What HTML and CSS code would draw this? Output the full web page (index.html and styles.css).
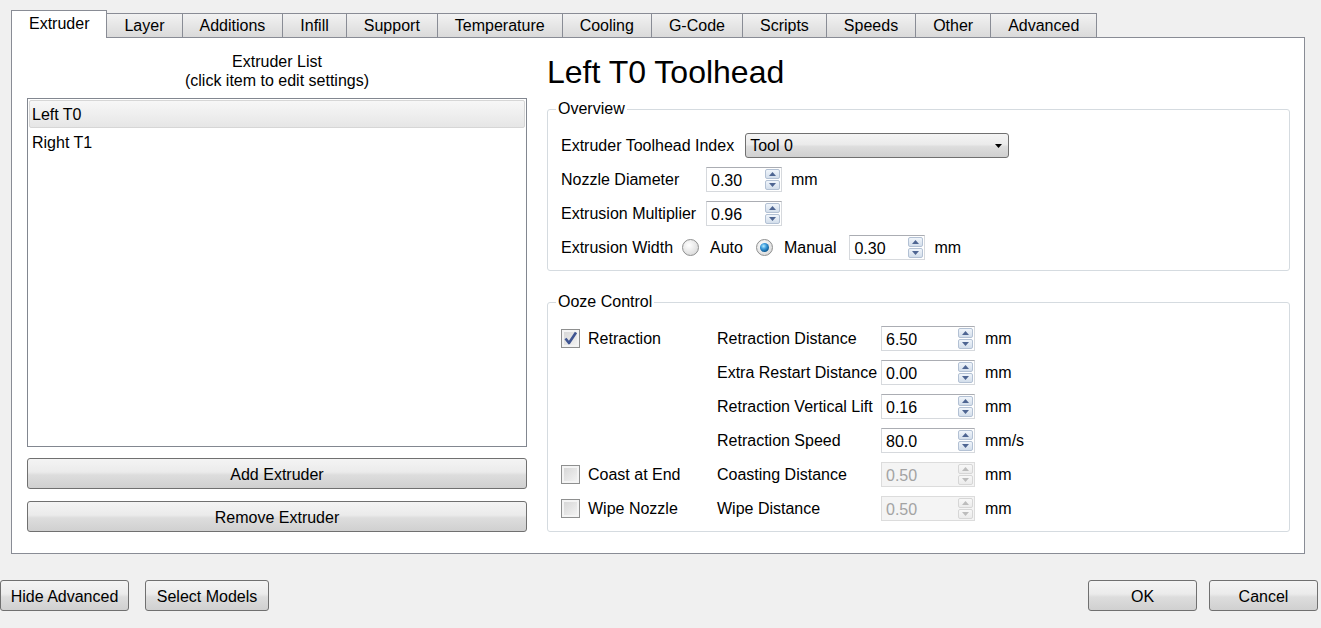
FILE: index.html
```html
<!DOCTYPE html>
<html lang="en">
<head>
<meta charset="utf-8">
<title>Extruder Settings</title>
<link rel="stylesheet" href="styles.css">
</head>
<body>
<div class="dialog">
  <div class="tabs">
    <div class="tab active">Extruder</div>
    <div class="tab">Layer</div>
    <div class="tab">Additions</div>
    <div class="tab">Infill</div>
    <div class="tab">Support</div>
    <div class="tab">Temperature</div>
    <div class="tab">Cooling</div>
    <div class="tab">G-Code</div>
    <div class="tab">Scripts</div>
    <div class="tab">Speeds</div>
    <div class="tab">Other</div>
    <div class="tab">Advanced</div>
  </div>
  <div class="pane">
    <div class="left">
      <div class="caption">Extruder List<br>(click item to edit settings)</div>
      <div class="listbox">
        <div class="item selected">Left T0</div>
        <div class="item">Right T1</div>
      </div>
      <button class="btn wide add">Add Extruder</button>
      <button class="btn wide remove">Remove Extruder</button>
    </div>
    <div class="right">
      <h1 class="title">Left T0 Toolhead</h1>
      <fieldset class="group">
        <legend>Overview</legend>
        <div class="group-body">
          <div class="row">
            <span>Extruder Toolhead Index</span>
            <div class="combo"><span>Tool 0</span><svg class="combo-arrow" width="7" height="4" viewBox="0 0 7 4"><polygon points="0,0 7,0 3.5,4" fill="#000"/></svg></div>
          </div>
          <div class="row">
            <span class="lbl-fixed">Nozzle Diameter</span>
            <div class="spin"><span class="val">0.30</span><span class="arrows"><span class="arr"><svg width="7" height="4" viewBox="0 0 7 4"><polygon points="0,4 3.5,0 7,4"/></svg></span><span class="arr"><svg width="7" height="4" viewBox="0 0 7 4"><polygon points="0,0 7,0 3.5,4"/></svg></span></span></div>
            <span>mm</span>
          </div>
          <div class="row">
            <span class="lbl-fixed">Extrusion Multiplier</span>
            <div class="spin"><span class="val">0.96</span><span class="arrows"><span class="arr"><svg width="7" height="4" viewBox="0 0 7 4"><polygon points="0,4 3.5,0 7,4"/></svg></span><span class="arr"><svg width="7" height="4" viewBox="0 0 7 4"><polygon points="0,0 7,0 3.5,4"/></svg></span></span></div>
          </div>
          <div class="row">
            <span>Extrusion Width</span>
            <label class="radio-opt"><span class="radio"></span><span>Auto</span></label>
            <label class="radio-opt"><span class="radio on"></span><span>Manual</span></label>
            <div class="spin"><span class="val">0.30</span><span class="arrows"><span class="arr"><svg width="7" height="4" viewBox="0 0 7 4"><polygon points="0,4 3.5,0 7,4"/></svg></span><span class="arr"><svg width="7" height="4" viewBox="0 0 7 4"><polygon points="0,0 7,0 3.5,4"/></svg></span></span></div>
            <span>mm</span>
          </div>
        </div>
      </fieldset>

      <fieldset class="group ooze">
        <legend>Ooze Control</legend>
        <div class="group-body ooze-grid">
          <label class="chk-opt"><span class="check"><svg width="17" height="17" viewBox="0 0 17 17"><path d="M3.5 8.5 L7 13 L14 2.5" fill="none" stroke="#3f5592" stroke-width="2.6" stroke-linejoin="round"/></svg></span><span>Retraction</span></label>
          <span>Retraction Distance</span>
          <div class="spin wide-spin"><span class="val">6.50</span><span class="arrows"><span class="arr"><svg width="7" height="4" viewBox="0 0 7 4"><polygon points="0,4 3.5,0 7,4"/></svg></span><span class="arr"><svg width="7" height="4" viewBox="0 0 7 4"><polygon points="0,0 7,0 3.5,4"/></svg></span></span></div>
          <span class="unit">mm</span>

          <span></span>
          <span>Extra Restart Distance</span>
          <div class="spin wide-spin"><span class="val">0.00</span><span class="arrows"><span class="arr"><svg width="7" height="4" viewBox="0 0 7 4"><polygon points="0,4 3.5,0 7,4"/></svg></span><span class="arr"><svg width="7" height="4" viewBox="0 0 7 4"><polygon points="0,0 7,0 3.5,4"/></svg></span></span></div>
          <span class="unit">mm</span>

          <span></span>
          <span>Retraction Vertical Lift</span>
          <div class="spin wide-spin"><span class="val">0.16</span><span class="arrows"><span class="arr"><svg width="7" height="4" viewBox="0 0 7 4"><polygon points="0,4 3.5,0 7,4"/></svg></span><span class="arr"><svg width="7" height="4" viewBox="0 0 7 4"><polygon points="0,0 7,0 3.5,4"/></svg></span></span></div>
          <span class="unit">mm</span>

          <span></span>
          <span>Retraction Speed</span>
          <div class="spin wide-spin"><span class="val">80.0</span><span class="arrows"><span class="arr"><svg width="7" height="4" viewBox="0 0 7 4"><polygon points="0,4 3.5,0 7,4"/></svg></span><span class="arr"><svg width="7" height="4" viewBox="0 0 7 4"><polygon points="0,0 7,0 3.5,4"/></svg></span></span></div>
          <span class="unit">mm/s</span>

          <label class="chk-opt"><span class="check"></span><span>Coast at End</span></label>
          <span>Coasting Distance</span>
          <div class="spin wide-spin disabled"><span class="val">0.50</span><span class="arrows"><span class="arr"><svg width="7" height="4" viewBox="0 0 7 4"><polygon points="0,4 3.5,0 7,4"/></svg></span><span class="arr"><svg width="7" height="4" viewBox="0 0 7 4"><polygon points="0,0 7,0 3.5,4"/></svg></span></span></div>
          <span class="unit">mm</span>

          <label class="chk-opt"><span class="check"></span><span>Wipe Nozzle</span></label>
          <span>Wipe Distance</span>
          <div class="spin wide-spin disabled"><span class="val">0.50</span><span class="arrows"><span class="arr"><svg width="7" height="4" viewBox="0 0 7 4"><polygon points="0,4 3.5,0 7,4"/></svg></span><span class="arr"><svg width="7" height="4" viewBox="0 0 7 4"><polygon points="0,0 7,0 3.5,4"/></svg></span></span></div>
          <span class="unit">mm</span>
        </div>
      </fieldset>
    </div>
  </div>
  <div class="footer">
    <div class="footer-left">
      <button class="btn btn-hide">Hide Advanced</button>
      <button class="btn btn-select">Select Models</button>
    </div>
    <div class="footer-right">
      <button class="btn btn-dlg">OK</button>
      <button class="btn btn-dlg">Cancel</button>
    </div>
  </div>
</div>
</body>
</html>
```

FILE: styles.css
```css
html, body {
  margin: 0;
  padding: 0;
}
body {
  background: #f0f0f0;
  font-family: "Liberation Sans", Arial, sans-serif;
  font-size: 16px;
  color: #000;
  width: 1321px;
  height: 628px;
  overflow: hidden;
}

/* Tabs */
.tabs {
  display: flex;
  align-items: flex-end;
  height: 27px;
  margin: 10px 0 0 11px;
}
.tab {
  box-sizing: border-box;
  height: 24px;
  padding: 0 17px;
  border: 1px solid #898c95;
  border-bottom: none;
  margin-right: -1px;
  background: linear-gradient(#f2f2f2, #e6e6e6 50%, #dadada);
  line-height: 23px;
  white-space: nowrap;
  position: relative;
}
.tab.active {
  height: 28px;
  margin-bottom: -1px;
  background: #fff;
  line-height: 26px;
  z-index: 2;
}

/* Pane */
.pane {
  box-sizing: border-box;
  margin-left: 11px;
  width: 1294px;
  height: 517px;
  border: 1px solid #898c95;
  background: #fff;
  display: flex;
  gap: 20px;
  padding: 14px 14px 0 15px;
}
.left {
  width: 500px;
  display: flex;
  flex-direction: column;
}
.caption {
  text-align: center;
  line-height: 19px;
}
.listbox {
  box-sizing: border-box;
  margin-top: 8px;
  height: 349px;
  border: 1px solid #828790;
  padding: 1px;
}
.item {
  box-sizing: border-box;
  height: 28px;
  line-height: 26px;
  padding: 2px 0 0 3px;
}
.item.selected {
  border: 1px solid #d6d6d6;
  border-radius: 2px;
  line-height: 24px;
  padding: 2px 0 0 2px;
  background: linear-gradient(#f7f7f7, #e6e6e6);
}

/* Buttons */
.btn {
  box-sizing: border-box;
  height: 31px;
  border: 1px solid #707070;
  border-radius: 3px;
  background: linear-gradient(#f4f4f4, #ebebeb 45%, #dddddd 55%, #d0d0d0);
  font-family: inherit;
  font-size: 16px;
  color: #000;
  padding: 2px 8px 0 8px;
  margin: 0;
}
.btn.wide {
  width: 100%;
  padding-top: 3px;
}
.btn.add {
  margin-top: 11px;
}
.btn.remove {
  margin-top: 12px;
}

/* Right column */
.right {
  width: 743px;
  display: flex;
  flex-direction: column;
}
.title {
  margin: 0 0 8px 0;
  font-size: 32px;
  font-weight: normal;
  line-height: 40px;
}
.group {
  margin: 0;
  padding: 0;
  border: 1px solid #d5dbe0;
  border-radius: 3px;
  min-width: 0;
}
.group legend {
  margin-left: 8px;
  padding: 0 2px;
  line-height: 18px;
}
.group.ooze {
  margin-top: 22px;
}
.group-body {
  padding: 10px 13px 6px 13px;
}
.row {
  display: flex;
  align-items: center;
  gap: 9px;
  height: 34px;
  white-space: nowrap;
}
.row > span,
.ooze-grid > span,
.chk-opt > span:last-child,
.radio-opt > span:last-child {
  padding-top: 2px;
}
.lbl-fixed {
  width: 136px;
}

/* Combo */
.combo {
  box-sizing: border-box;
  width: 264px;
  height: 25px;
  margin-left: 2px;
  border: 1px solid #707070;
  border-radius: 3px;
  background: linear-gradient(#f4f4f4, #ebebeb 45%, #dddddd 55%, #d0d0d0);
  display: flex;
  align-items: center;
  justify-content: space-between;
  padding: 2px 6px 0 4px;
}

/* Spin boxes */
.spin {
  box-sizing: border-box;
  width: 76px;
  height: 25px;
  border: 1px solid #d6d9dd;
  border-top-color: #abadb3;
  background: #fff;
  display: flex;
}
.spin.wide-spin {
  width: 94px;
}
.spin .val {
  flex: 1;
  padding: 2px 0 0 4px;
  line-height: 21px;
}
.arrows {
  display: flex;
  flex-direction: column;
  gap: 1px;
  width: 15px;
  margin: 1px 1px 1px 0;
}
.arr {
  flex: 1;
  box-sizing: border-box;
  border: 1px solid #b3c1d4;
  border-radius: 2px;
  background: linear-gradient(#f0f5fb, #d3deeb);
  display: flex;
  align-items: center;
  justify-content: center;
}
.arr svg {
  fill: #4e6592;
}
.spin.disabled {
  background: #f4f4f4;
  color: #a3a3a3;
  border-color: #dcdcdc;
}
.spin.disabled .arr {
  border-color: #d6d6d6;
  background: linear-gradient(#f8f8f8, #ebebeb);
}
.spin.disabled .arr svg {
  fill: #bcbcbc;
}

/* Radio */
.radio-opt {
  display: flex;
  align-items: center;
  gap: 11px;
  margin-right: 4px;
}
.radio {
  box-sizing: border-box;
  width: 17px;
  height: 17px;
  border-radius: 50%;
  border: 1px solid #8e8f8f;
  background: radial-gradient(circle at 40% 35%, #ffffff, #e6e6e6 55%, #cfcfcf);
  display: flex;
  align-items: center;
  justify-content: center;
}
.radio.on::after {
  content: "";
  width: 9px;
  height: 9px;
  border-radius: 50%;
  background: radial-gradient(circle at 40% 35%, #b5ecff 0, #3d9bdc 35%, #0e5d97 70%, #0b3e66 100%);
}

/* Ooze grid */
.ooze-grid {
  display: grid;
  grid-template-columns: 156px 164px 94px auto;
  grid-auto-rows: 34px;
  align-items: center;
  white-space: nowrap;
}
.unit {
  margin-left: 10px;
}
.chk-opt {
  display: flex;
  align-items: center;
  gap: 8px;
}
.check {
  box-sizing: border-box;
  width: 19px;
  height: 19px;
  border: 1px solid #8e8f8f;
  background: linear-gradient(135deg, #d3d3d3, #f6f6f6);
  box-shadow: inset 0 0 0 2px #f4f4f4;
  display: flex;
  align-items: center;
  justify-content: center;
}

/* Footer */
.footer {
  display: flex;
  justify-content: space-between;
  margin-top: 26px;
  padding-right: 3px;
}
.footer-left {
  display: flex;
  gap: 16px;
}
.footer-right {
  display: flex;
  gap: 12px;
}
.btn-hide {
  width: 129px;
}
.btn-select {
  width: 124px;
}
.btn-dlg {
  width: 109px;
}
```
